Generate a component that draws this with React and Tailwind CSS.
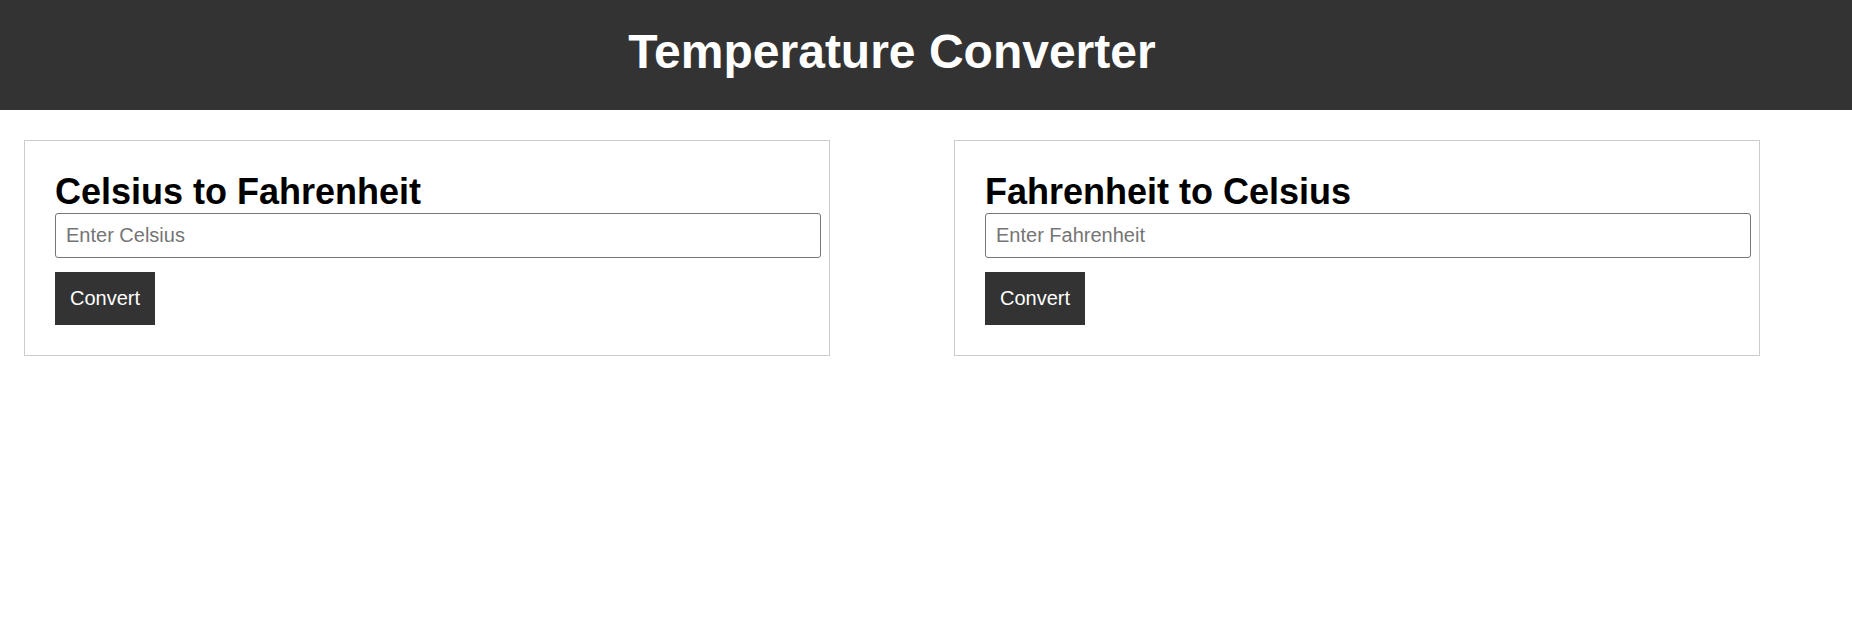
import { useState } from "react"

function ConverterCard({ title, placeholder, onConvert }) {
  const [value, setValue] = useState("")
  const [result, setResult] = useState("")

  const handleClick = () => {
    const n = parseFloat(value)
    if (isNaN(n)) {
      setResult("")
      return
    }
    setResult(onConvert(n))
  }

  return (
    <div className="w-[806px] shrink-0 border border-[#ccc] p-[30px]">
      <h2 className="m-0 text-[36px] leading-[1.15] font-bold text-black">{title}</h2>
      <input
        type="text"
        value={value}
        onChange={(e) => setValue(e.target.value)}
        placeholder={placeholder}
        className="box-content block w-full h-[23px] mt-px p-[10px] border border-[#767676] rounded-[3px] text-[20px] leading-[23px] text-black placeholder:text-[#757575] outline-none"
      />
      <button
        onClick={handleClick}
        className="mt-[14px] block bg-[#333] text-white text-[20px] leading-[23px] px-[15px] py-[15px]"
      >
        Convert
      </button>
      {result && <p className="mt-2 text-[20px]">{result}</p>}
    </div>
  )
}

export default function App() {
  return (
    <div className="min-h-screen bg-white font-['Liberation_Sans',Arial,sans-serif]">
      {/* Header */}
      <header className="h-[110px] bg-[#333] flex items-center justify-center pr-[68px] pb-[7px]">
        <h1 className="m-0 text-[48px] leading-[1.15] font-bold text-white">Temperature Converter</h1>
      </header>

      {/* Cards */}
      <div className="flex gap-[124px] pl-[24px] pt-[30px]">
        <ConverterCard
          title="Celsius to Fahrenheit"
          placeholder="Enter Celsius"
          onConvert={(c) => `${((c * 9) / 5 + 32).toFixed(2)} °F`}
        />
        <ConverterCard
          title="Fahrenheit to Celsius"
          placeholder="Enter Fahrenheit"
          onConvert={(f) => `${(((f - 32) * 5) / 9).toFixed(2)} °C`}
        />
      </div>
    </div>
  )
}
